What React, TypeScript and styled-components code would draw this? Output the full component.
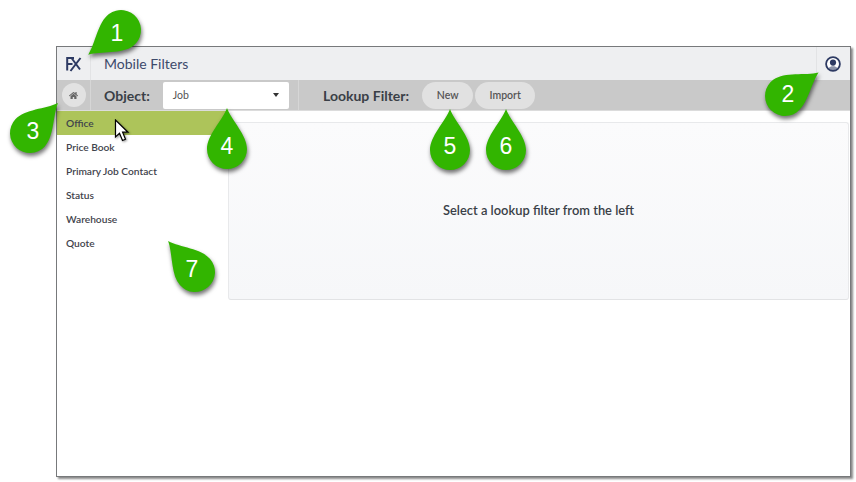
import React from "react";
import styled, { createGlobalStyle } from "styled-components";
import { FaHome } from "react-icons/fa";

const GlobalStyle = createGlobalStyle`
  html, body {
    margin: 0;
    padding: 0;
    background: #fff;
    font-family: "Lato", "Liberation Sans", sans-serif;
  }
`;

const Page = styled("div")`
  position: relative;
  width: 856px;
  height: 482px;
  padding: 46px 0 0 56px;
  box-sizing: border-box;
  overflow: hidden;
`;

const AppWindow = styled("div")`
  width: 795px;
  height: 431px;
  box-sizing: border-box;
  background: #fff;
  border: 1px solid #77797b;
  box-shadow: 2px 2px 2px #8a8a8a;
  display: flex;
  flex-direction: column;
`;

const TopBar = styled("div")`
  height: 33px;
  flex: none;
  display: flex;
  align-items: stretch;
  background: #eeeff1;
`;

const LogoCell = styled("div")`
  width: 33px;
  display: flex;
  align-items: center;
  justify-content: center;
  border-right: 1px solid #e2e3e5;
`;

const Title = styled("div")`
  flex: 1;
  padding-left: 13px;
  display: flex;
  align-items: center;
  font-size: 14px;
  color: #3d4a6b;
`;

const UserCell = styled("div")`
  width: 34px;
  padding-right: 1px;
  display: flex;
  align-items: center;
  justify-content: center;
  border-left: 1px solid #e2e3e5;
  box-sizing: border-box;
`;

const Toolbar = styled("div")`
  height: 31px;
  flex: none;
  display: flex;
  align-items: center;
  background: #c9c9c9;
  border-bottom: 1px solid #dcdcdc;
  box-sizing: border-box;
`;

const HomeCell = styled("div")`
  width: 33px;
  height: 100%;
  display: flex;
  align-items: center;
  justify-content: center;
  border-right: 1px solid #d6d6d6;
`;

const HomeButton = styled("div")`
  width: 24px;
  height: 24px;
  border-radius: 50%;
  background: #e2e2e2;
  color: #666;
  font-size: 9px;
  display: flex;
  align-items: center;
  justify-content: center;
`;

const ObjectSection = styled("div")`
  width: 208px;
  height: 100%;
  box-sizing: border-box;
  padding-left: 13px;
  display: flex;
  align-items: center;
  border-right: 1px solid #d6d6d6;
`;

const ToolLabel = styled("span")<{ gap: number }>`
  font-size: 14px;
  font-weight: 700;
  color: #3a3f47;
  margin-right: ${({ gap }) => gap}px;
  white-space: nowrap;
`;

const SelectBox = styled("div")`
  width: 126px;
  height: 27px;
  box-sizing: border-box;
  padding: 0 10px 0 10px;
  background: #fff;
  border-radius: 2px;
  display: flex;
  align-items: center;
  justify-content: space-between;
  font-size: 10.5px;
  color: #555;
`;

const Caret = styled("span")`
  width: 0;
  height: 0;
  border-left: 3.5px solid transparent;
  border-right: 3.5px solid transparent;
  border-top: 4px solid #333;
`;

const FilterSection = styled("div")`
  padding-left: 24px;
  height: 100%;
  display: flex;
  align-items: center;
`;

const PillButton = styled("div")<{ w: number }>`
  width: ${({ w }) => w}px;
  height: 27px;
  margin-right: 2px;
  border-radius: 14px;
  background: #e1e1e1;
  color: #555;
  font-size: 10.5px;
  font-weight: 600;
  display: flex;
  align-items: center;
  justify-content: center;
`;

const Body = styled("div")`
  flex: 1;
  display: flex;
  align-items: flex-start;
`;

const Sidebar = styled("div")`
  width: 171px;
  flex: none;
`;

const SideItem = styled("div")<{ active?: boolean }>`
  height: 24px;
  padding-left: 9px;
  display: flex;
  align-items: center;
  font-size: 10.2px;
  font-weight: 600;
  color: #3f444c;
  background: ${({ active }) => (active ? "#adc45a" : "transparent")};
`;

const Panel = styled("div")`
  flex: 1;
  height: 178px;
  margin: 11px 1px 0 0;
  box-sizing: border-box;
  background: linear-gradient(#fbfbfc, #f6f7f9);
  border: 1px solid #e8e9eb;
  border-bottom-color: #e2e3e5;
  border-radius: 3px;
  padding-top: 79px;
  text-align: center;
  font-size: 12.9px;
  font-weight: 600;
  color: #3a3f47;
`;

// numbered callouts lie over the screenshot
const PinWrap = styled("div")`
  position: absolute;
  left: 0;
  top: 0;
`;

const PinSvg = styled("svg")`
  position: absolute;
  overflow: visible;
  filter: drop-shadow(1px 3px 2px rgba(0, 0, 0, 0.55));
`;

const PinNumber = styled("div")`
  position: absolute;
  width: 30px;
  height: 26px;
  margin: -13px 0 0 -15px;
  text-align: center;
  font-family: "Liberation Sans", Arial, sans-serif;
  font-size: 23px;
  line-height: 26px;
  color: #fff;
`;

const CursorSvg = styled("svg")`
  position: absolute;
  left: 114px;
  top: 119px;
  filter: drop-shadow(1px 1px 1px rgba(0, 0, 0, 0.4));
`;

type PinProps = {
  n: number;
  x: number;
  y: number;
  angle: number;
  tx: number;
  ty: number;
};

const pins: PinProps[] = [
  { n: 1, x: 120.5, y: 29.5, angle: -127, tx: 117, ty: 33 },
  { n: 2, x: 785, y: 96, angle: 55, tx: 788, ty: 94 },
  { n: 3, x: 30, y: 133, angle: 43, tx: 33, ty: 131 },
  { n: 4, x: 227, y: 149, angle: 0, tx: 227, ty: 146 },
  { n: 5, x: 450, y: 150, angle: 0, tx: 450, ty: 146 },
  { n: 6, x: 506, y: 150, angle: 0, tx: 506, ty: 146 },
  { n: 7, x: 195, y: 272, angle: -41, tx: 192, ty: 269 },
];

const Pin = ({ n, x, y, angle, tx, ty }: PinProps) => (
  <PinWrap>
    <PinSvg
      width="100"
      height="100"
      viewBox="-50 -50 100 100"
      style={{ left: x - 50, top: y - 50 }}
    >
      <path
        transform={`rotate(${angle})`}
        fill="#32b500"
        d="M0 -41 C5 -28 20 -14 20 0 A20 20 0 1 1 -20 0 C-20 -14 -5 -28 0 -41 Z"
      />
    </PinSvg>
    <PinNumber style={{ left: tx, top: ty }}>{n}</PinNumber>
  </PinWrap>
);

const FxLogo = () => (
  <svg width="17" height="16" viewBox="0 0 17 16">
    <path
      fill="none"
      stroke="#2d3a63"
      strokeWidth="2"
      d="M9 2H2.2V14.5M2.2 8H7.5M6.5 2L15 13.5M15.5 2L5.5 15"
    />
  </svg>
);

const UserIcon = () => (
  <svg width="16" height="16" viewBox="0 0 16 16">
    <circle cx="8" cy="8" r="6.9" fill="#fff" stroke="#2d3a63" strokeWidth="1.8" />
    <circle cx="8" cy="6.6" r="3.1" fill="#2d3a63" />
    <path fill="#2d3a63" d="M3.6 12.2C4.6 10.8 6 10.3 8 10.3s3.4.5 4.4 1.9C11.5 13.4 9.9 14 8 14s-3.5-.6-4.4-1.8Z" opacity="0.55" />
  </svg>
);

const items = ["Office", "Price Book", "Primary Job Contact", "Status", "Warehouse", "Quote"];

export default function App() {
  return (
    <Page>
      <GlobalStyle />
      <AppWindow>
        <TopBar>
          <LogoCell>
            <FxLogo />
          </LogoCell>
          <Title>Mobile Filters</Title>
          <UserCell>
            <UserIcon />
          </UserCell>
        </TopBar>
        <Toolbar>
          <HomeCell>
            <HomeButton>
              <FaHome />
            </HomeButton>
          </HomeCell>
          <ObjectSection>
            <ToolLabel gap={13}>Object:</ToolLabel>
            <SelectBox>
              Job
              <Caret />
            </SelectBox>
          </ObjectSection>
          <FilterSection>
            <ToolLabel gap={13}>Lookup Filter:</ToolLabel>
            <PillButton w={51}>New</PillButton>
            <PillButton w={60}>Import</PillButton>
          </FilterSection>
        </Toolbar>
        <Body>
          <Sidebar>
            {items.map((item, i) => (
              <SideItem key={item} active={i === 0}>
                {item}
              </SideItem>
            ))}
          </Sidebar>
          <Panel>Select a lookup filter from the left</Panel>
        </Body>
      </AppWindow>
      {pins.map((p) => (
        <Pin key={p.n} {...p} />
      ))}
      <CursorSvg width="16" height="25" viewBox="0 0 16 25">
        <path
          fill="#fff"
          stroke="#000"
          strokeWidth="1.2"
          d="M1.5 1V18L5.5 14.3L8.5 21.5L11.5 20.2L8.6 13.2H14Z"
        />
      </CursorSvg>
    </Page>
  );
}
